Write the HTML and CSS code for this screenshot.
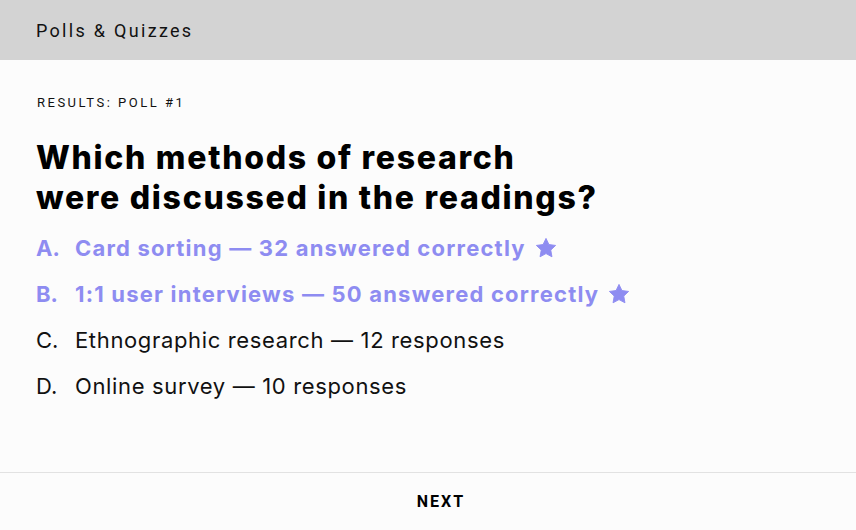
FILE: index.html
```html
<!DOCTYPE html>
<html lang="en">
<head>
<meta charset="utf-8">
<title>Polls &amp; Quizzes</title>
<link rel="stylesheet" href="styles.css">
</head>
<body>
<div class="app">
  <header class="topbar">Polls &amp; Quizzes</header>
  <main class="content">
    <div class="eyebrow">RESULTS: POLL #1</div>
    <h1 class="question">Which methods of research<br>were discussed in the readings?</h1>
    <ol class="answers">
      <li class="answer correct"><span class="letter">A.</span><span class="text">Card sorting — 32 answered correctly</span><svg class="star" viewBox="0 0 24 24"><path d="M12 1.5l3.2 6.7 7.3 1-5.3 5.1 1.3 7.3L12 18.1l-6.5 3.5 1.3-7.3-5.3-5.1 7.3-1z" stroke="#8e8cf1" stroke-width="1" stroke-linejoin="round"/></svg></li>
      <li class="answer correct"><span class="letter">B.</span><span class="text">1:1 user interviews — 50 answered correctly</span><svg class="star" viewBox="0 0 24 24"><path d="M12 1.5l3.2 6.7 7.3 1-5.3 5.1 1.3 7.3L12 18.1l-6.5 3.5 1.3-7.3-5.3-5.1 7.3-1z" stroke="#8e8cf1" stroke-width="1" stroke-linejoin="round"/></svg></li>
      <li class="answer"><span class="letter">C.</span><span class="text">Ethnographic research — 12 responses</span></li>
      <li class="answer"><span class="letter">D.</span><span class="text">Online survey — 10 responses</span></li>
    </ol>
  </main>
  <footer class="footer">
    <button class="next">NEXT</button>
  </footer>
</div>
</body>
</html>
```

FILE: styles.css
```css
html, body {
  margin: 0;
  padding: 0;
  height: 100%;
  background: #fcfcfc;
}
.app {
  display: flex;
  flex-direction: column;
  height: 530px;
  background: #fcfcfc;
}
.topbar {
  height: 60px;
  flex: none;
  box-sizing: border-box;
  background: #d3d3d3;
  padding-left: 36px;
  display: flex;
  align-items: center;
  font-family: Roboto, "Liberation Sans", sans-serif;
  font-size: 18px;
  letter-spacing: 2.3px;
  color: #111;
}
.content {
  flex: 1;
  padding: 35px 36px 0 36px;
}
.eyebrow {
  font-family: Roboto, "Liberation Sans", sans-serif;
  font-size: 13px;
  line-height: 16px;
  letter-spacing: 2.5px;
  color: #111;
  padding-left: 1px;
}
.question {
  margin: 27px 0 0 0;
  font-family: Inter, "Noto Sans", sans-serif;
  font-weight: 800;
  font-size: 32px;
  line-height: 40px;
  letter-spacing: 1.7px;
  color: #000;
}
.answers {
  list-style: none;
  margin: 7px 0 0 0;
  padding: 0;
}
.answer {
  display: flex;
  align-items: center;
  height: 46px;
  font-family: Inter, "Noto Sans", sans-serif;
  font-size: 22px;
  letter-spacing: 0.65px;
  color: #111;
}
.letter {
  width: 39px;
  flex: none;
  letter-spacing: 0;
}
.answer.correct {
  color: #8e8cf1;
  font-weight: 700;
  letter-spacing: 1.2px;
}
.star {
  width: 22px;
  height: 22px;
  margin-left: 9px;
  fill: #8e8cf1;
}
.footer {
  flex: none;
  height: 57px;
  border-top: 1px solid #e2e2e2;
  display: flex;
  align-items: center;
  justify-content: center;
  padding-left: 26px;
}
.next {
  border: none;
  background: none;
  font-family: Roboto, "Liberation Sans", sans-serif;
  font-weight: 700;
  font-size: 16px;
  letter-spacing: 2px;
  color: #000;
  padding: 0;
}
```
